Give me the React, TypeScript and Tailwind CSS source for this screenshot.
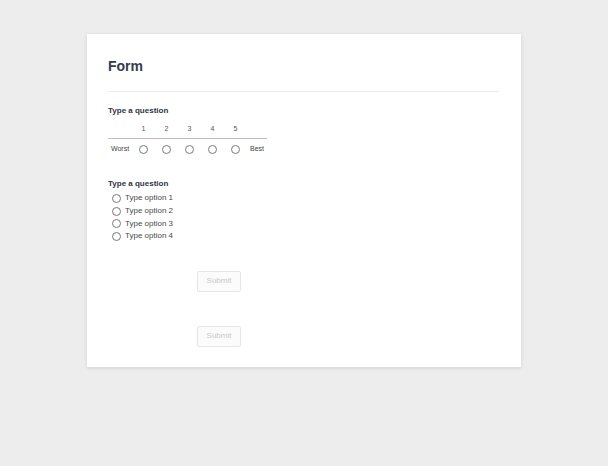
import React from "react";

const scale = [1, 2, 3, 4, 5];
const options = ["Type option 1", "Type option 2", "Type option 3", "Type option 4"];

function Radio() {
  return <span className="block w-[9px] h-[9px] rounded-full border border-[#7a7a7a] bg-white" />;
}

function SubmitButton() {
  return (
    <button className="w-[44px] h-[21px] rounded-[2px] border border-[#e6e6e6] bg-[#fbfbfb] text-[8px] text-[#c8c8c8]">
      Submit
    </button>
  );
}

export default function App() {
  return (
    <div className="min-h-[466px] bg-[#ededed] pt-[34px] font-['Liberation_Sans',Arial,sans-serif]">
      <div className="mx-auto w-[434px] h-[333px] bg-white shadow-[0_1px_4px_rgba(0,0,0,0.12)] pl-[21px] pr-[22px] pt-[23px]">
        <h1 className="text-[14px] leading-[18px] font-bold text-[#353b4e]">Form</h1>
        <div className="mt-[16px] h-px bg-[#ebebeb]" />

        {/* Likert question */}
        <div className="mt-[13px] text-[8px] leading-[12px] font-bold text-[#2f3345]">Type a question</div>
        <div className="mt-[4px] w-[159px]">
          <div className="flex h-[18px] pt-[3px] items-start text-[7px] leading-[10px] text-[#555] border-b border-[#bdbdbd]">
            <span className="w-[24px]" />
            {scale.map((n) => (
              <span key={n} className="w-[23px] text-center">{n}</span>
            ))}
          </div>
          <div className="flex h-[21px] items-center text-[7px] text-[#444]">
            <span className="w-[24px] text-center">Worst</span>
            {scale.map((n) => (
              <span key={n} className="w-[23px] flex justify-center"><Radio /></span>
            ))}
            <span className="w-[20px] text-center">Best</span>
          </div>
        </div>

        {/* Choice question */}
        <div className="mt-[18px] text-[8px] leading-[12px] font-bold text-[#2f3345]">Type a question</div>
        <div className="mt-[2px] flex flex-col pl-[4px]">
          {options.map((o) => (
            <label key={o} className="flex h-[12.7px] items-center gap-[4px] text-[8px] text-[#4a4a4a]">
              <Radio />
              <span>{o}</span>
            </label>
          ))}
        </div>

        <div className="mt-[28px] pl-[89px] flex flex-col gap-[34px]">
          <SubmitButton />
          <SubmitButton />
        </div>
      </div>
    </div>
  );
}
